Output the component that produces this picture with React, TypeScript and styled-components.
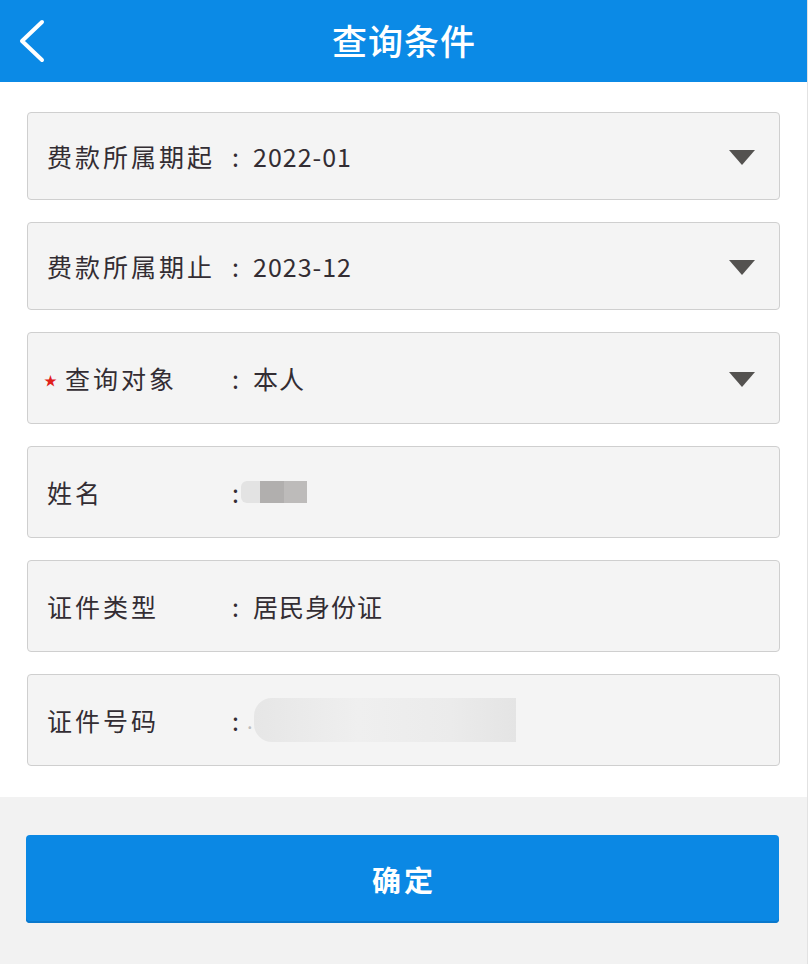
import React from "react";
import styled, { createGlobalStyle } from "styled-components";

const Global = createGlobalStyle`
  html, body { margin: 0; padding: 0; background: #ffffff; }
  body { font-family: "Noto Sans CJK SC", "Noto Sans", sans-serif; }
  * { box-sizing: border-box; }
`;

const Page = styled.div`
  width: 808px;
  min-height: 964px;
  border-right: 1px solid #e2e2e2;
  display: flex;
  flex-direction: column;
  background: #f2f2f2;
`;

const Header = styled.header`
  height: 82px;
  background: #0b8ae6;
  display: flex;
  align-items: center;
  justify-content: center;
  position: relative;
`;

const BackButton = styled.div`
  position: absolute;
  left: 16px;
  top: 18px;
  width: 32px;
  height: 46px;
  display: flex;
`;

const Title = styled.h1`
  margin: 0;
  color: #ffffff;
  font-size: 35px;
  font-weight: 500;
  letter-spacing: 1px;
  padding-left: 1px;
  padding-bottom: 3px;
  line-height: 1;
`;

const Form = styled.section`
  background: #ffffff;
  padding: 30px 27px 31px 27px;
  display: flex;
  flex-direction: column;
  gap: 22px;
`;

const Field = styled.div<{ $h: number }>`
  height: ${(p) => p.$h}px;
  background: #f4f4f4;
  border: 1px solid #cfcfcf;
  border-radius: 4px;
  display: flex;
  align-items: center;
  padding: 0 24px 0 19px;
  font-size: 25px;
  color: #332d33;
`;

const Label = styled.div`
  width: 183px;
  flex: none;
  display: flex;
  align-items: center;
  white-space: nowrap;
  letter-spacing: 3px;
`;

const Star = styled.span`
  color: #e0201a;
  font-size: 13px;
  width: 21px;
  margin-left: -3px;
  margin-top: 2px;
  letter-spacing: 0;
`;

const Colon = styled.span`
  width: 23px;
  flex: none;
  text-align: left;
  padding-left: 2px;
`;

const Value = styled.div`
  flex: 1;
  display: flex;
  align-items: center;
  white-space: nowrap;
  letter-spacing: 1px;
`;

const Caret = styled.div`
  width: 0;
  height: 0;
  border-left: 13px solid transparent;
  border-right: 13px solid transparent;
  border-top: 15px solid #545250;
  margin-top: 2px;
`;

const NameMask = styled.div`
  display: flex;
  height: 22px;
  margin-left: -12px;
`;

const MaskPart = styled.div<{ $w: number; $c: string }>`
  width: ${(p) => p.$w}px;
  background: ${(p) => p.$c};
  &:first-child { border-radius: 6px 0 0 6px; }
`;

const IdDot = styled.span`
  color: #bdbdbd;
  font-size: 20px;
  margin-left: -6px;
`;

const IdMask = styled.div`
  width: 262px;
  height: 44px;
  border-radius: 18px 0 0 18px;
  background: linear-gradient(90deg, #e6e6e6 0%, #efefef 40%, #ebebeb 75%, #e4e4e4 100%);
`;

const Footer = styled.section`
  flex: 1;
  background: #f2f2f2;
  padding: 38px 28px 0 26px;
`;

const Confirm = styled.button`
  width: 100%;
  height: 88px;
  border: none;
  border-radius: 4px;
  background: #0b88e4;
  box-shadow: inset 0 -2px 0 #0a78cc;
  color: #ffffff;
  font-family: "Noto Sans CJK SC", "Noto Sans", sans-serif;
  font-size: 29px;
  font-weight: 700;
  letter-spacing: 3px;
  padding: 0;
  padding-left: 3px;
  cursor: pointer;
`;

type Row = {
  label: string;
  value?: string;
  required?: boolean;
  select?: boolean;
  h: number;
  mask?: "name" | "id";
};

const rows: Row[] = [
  { label: "费款所属期起", value: "2022-01", select: true, h: 88 },
  { label: "费款所属期止", value: "2023-12", select: true, h: 88 },
  { label: "查询对象", value: "本人", select: true, required: true, h: 92 },
  { label: "姓名", h: 92, mask: "name" },
  { label: "证件类型", value: "居民身份证", h: 92 },
  { label: "证件号码", h: 92, mask: "id" },
];

export default function App() {
  return (
    <>
      <Global />
      <Page>
        <Header>
          <BackButton>
            <svg width="32" height="46" viewBox="0 0 32 46">
              <polyline
                points="26,4 6,23 26,42"
                fill="none"
                stroke="#ffffff"
                strokeWidth="4"
                strokeLinecap="round"
                strokeLinejoin="round"
              />
            </svg>
          </BackButton>
          <Title>查询条件</Title>
        </Header>
        <Form>
          {rows.map((r) => (
            <Field key={r.label} $h={r.h}>
              <Label>
                {r.required && <Star>★</Star>}
                {r.label}
              </Label>
              <Colon>:</Colon>
              <Value>
                {r.value}
                {r.mask === "name" && (
                  <NameMask>
                    <MaskPart $w={19} $c="#e3e3e3" />
                    <MaskPart $w={24} $c="#b1afae" />
                    <MaskPart $w={23} $c="#bdbbba" />
                  </NameMask>
                )}
                {r.mask === "id" && (
                  <>
                    <IdDot>.</IdDot>
                    <IdMask />
                  </>
                )}
              </Value>
              {r.select && <Caret />}
            </Field>
          ))}
        </Form>
        <Footer>
          <Confirm>确定</Confirm>
        </Footer>
      </Page>
    </>
  );
}
